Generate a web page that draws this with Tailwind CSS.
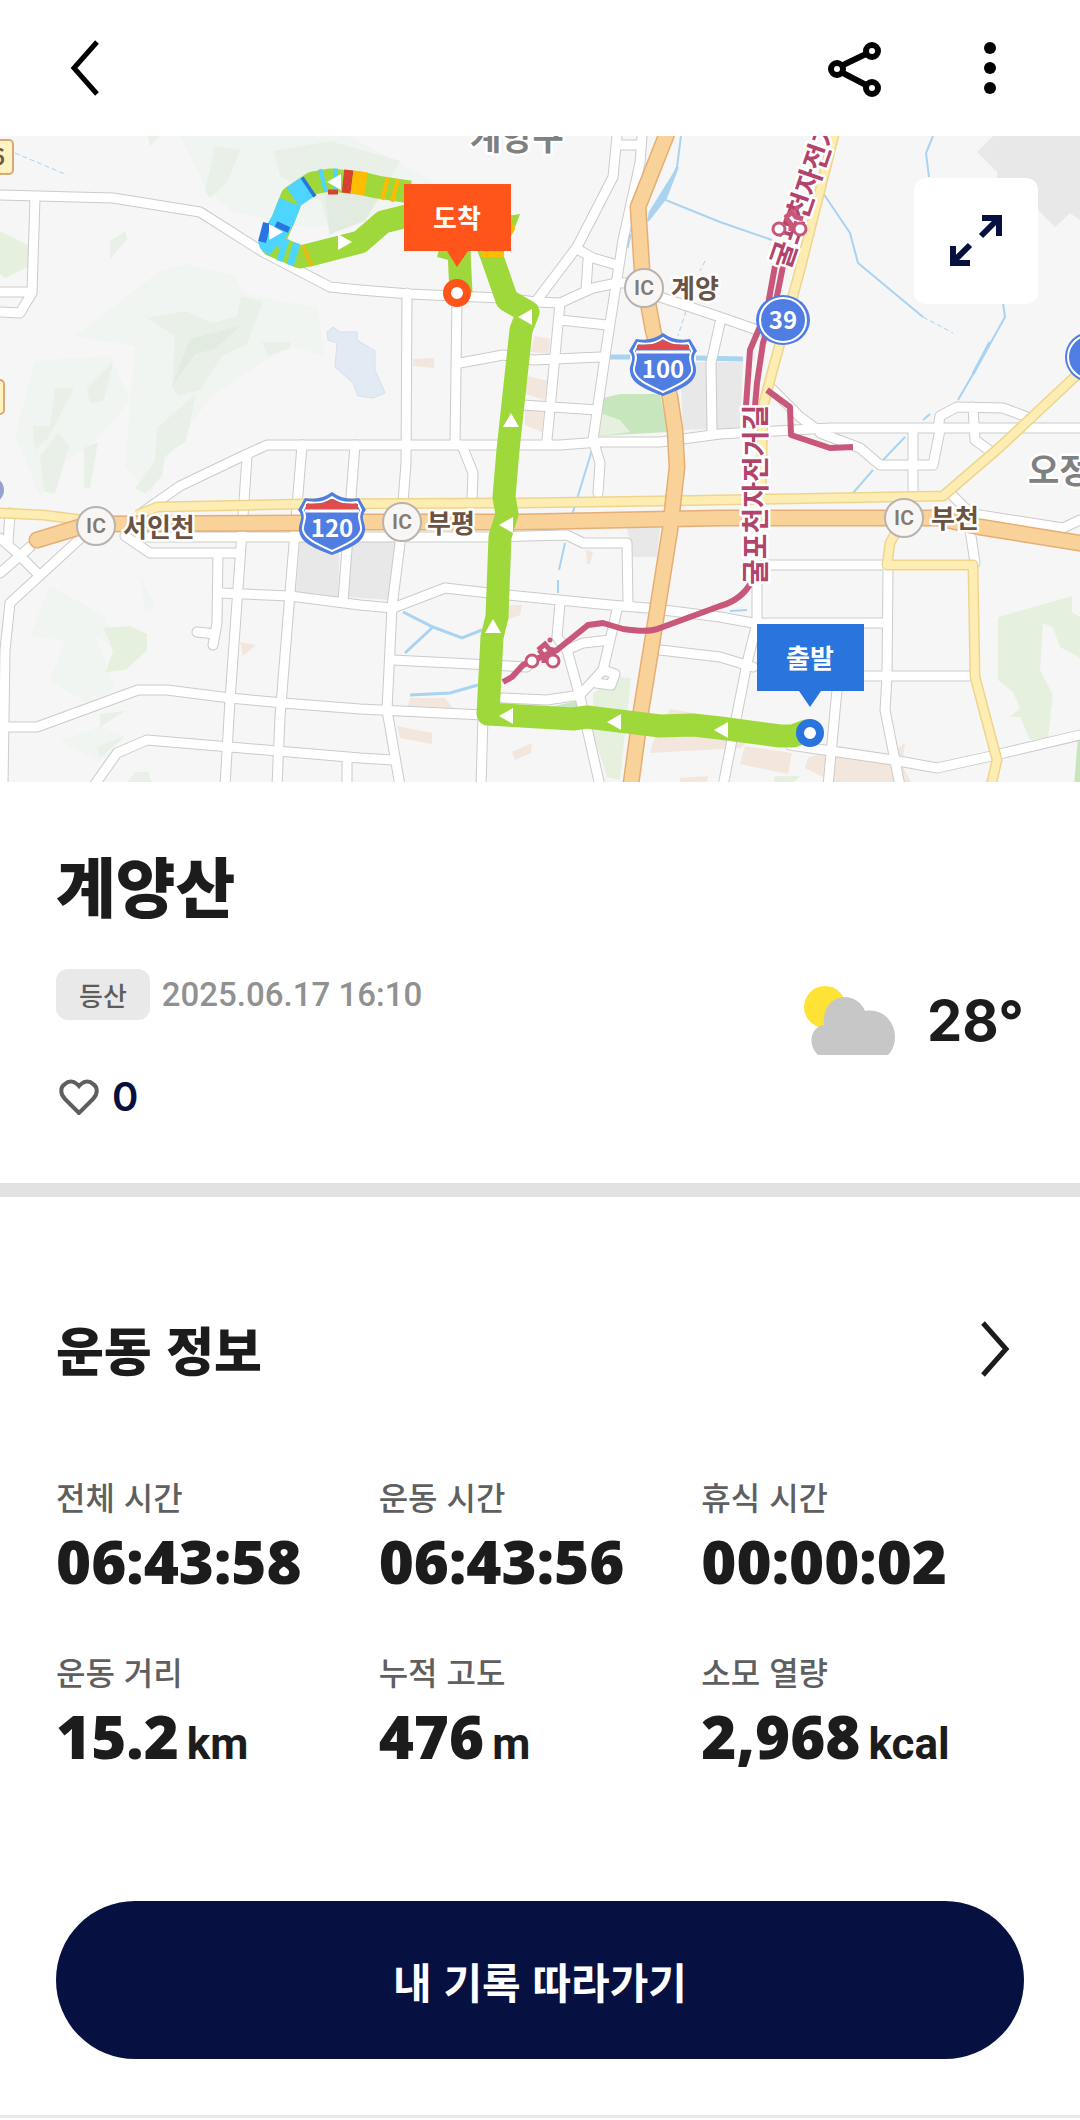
<!DOCTYPE html>
<html lang="ko">
<head>
    <meta charset="UTF-8">
    <meta name="viewport" content="width=device-width, initial-scale=1.0">
    <title>계양산</title>
    <script src="https://cdn.jsdelivr.net/npm/@tailwindcss/browser@4"></script>
</head>
<body class="bg-white text-[#1c1c1c] font-['Noto_Sans_CJK_KR',sans-serif]">
    <header class="flex h-[136px] items-center justify-between px-[58px]">
        <button type="button" aria-label="뒤로" class="flex size-14 items-center justify-center">
            <svg class="h-14 w-8" viewBox="0 0 32 56" fill="none" stroke="#000" stroke-width="5"><path d="M27 2 4 28l23 26"/></svg>
        </button>
        <div class="flex items-center gap-[72px]">
            <button type="button" aria-label="공유">
                <svg class="size-16" viewBox="0 0 64 64" fill="none" stroke="#000" stroke-width="6">
                    <path d="m19 30 25-12M19 36l25 13"/>
                    <circle cx="50" cy="15" r="6"/><circle cx="15" cy="33" r="6"/><circle cx="50" cy="52" r="6"/>
                </svg>
            </button>
            <button type="button" aria-label="더보기">
                <svg class="size-16" viewBox="0 0 64 64"><circle cx="32" cy="12" r="6"/><circle cx="32" cy="32" r="6"/><circle cx="32" cy="52" r="6"/></svg>
            </button>
        </div>
    </header>

    <div class="relative">
        <svg class="block w-full bg-[#f6f6f6]" viewBox="0 0 1080 646" role="img" aria-label="이동 경로 지도">
            <defs>
                <g id="roads" fill="none" stroke-linejoin="round" stroke-linecap="round">
                    <path d="M0 59 113 62 200 76 263 116 330 151 360 154 410 158 500 162 537 166 560 167 593 152 617 147 643 147 660 161 720 181 760 195"/>
                    <path d="M35 62 32 157 20 177 0 176M0 156H32"/>
                    <path d="M143 376 180 350 247 318 267 309H360L560 309 600 306 660 306 720 298 830 292H1080"/>
                    <path d="M247 321 240 424 230 564 225 650M302 309 290 457 280 581 277 650M355 309 343 465"/>
                    <path d="M218 417 217 487 213 509M197 496 215 498M125 400 150 417H240M222 457 290 460 360 469 393 472 445 452 507 459 610 469 647 472 720 481 753 487H883"/>
                    <path d="M0 591H37L138 554H167L230 562 283 567 360 573 483 579M93 651 117 617 147 604 230 611 360 622 393 624M347 624V650"/>
                    <path d="M83 400 10 467 5 514 3 650M0 437 30 411M0 402 17 417 37 437M10 377 8 407"/>
                    <path d="M950 357 967 374 975 427M980 379 1063 392 1080 384M763 429H883M888 434 887 541 885 574 900 650M757 437V487L747 527 723 650M863 540H970M837 554 828 650"/>
                    <path d="M790 609 893 624 937 632 987 621 1080 599M660 514 720 521 753 531M913 294V357M938 293 940 280 957 271 1003 272 1027 281M973 271 975 304 993 317M940 294 933 329H880L860 312 820 297"/>
                    <path d="M770 251 800 281 815 292M617 0 613 41 577 111 537 164M642 0 640 27 623 104 607 207 593 304 600 327 598 357M620 9H640M577 113 593 122 617 129M588 124 586 154"/>
                    <path d="M560 167 547 304M560 184 607 189M460 227 503 219 533 224 600 221M523 269 597 274M457 161 455 307M407 157 406 327 400 407 392 471 387 574 400 650"/>
                    <path d="M463 312 473 337 472 364M393 524 527 531M503 562 547 564 580 559M483 581 481 650M560 467 557 501 567 514 580 561 600 650M617 474 603 534 615 538 611 549 596 547M603 534 580 559M610 504 583 507 567 514"/>
                    <path d="M140 401H493L567 399 583 407H627L628 467M720 187 711 227 712 294"/>
                </g>
                <g id="orange" fill="none" stroke-linecap="round" stroke-linejoin="round">
                    <path d="M37 404 80 391 97 388 300 387 360 386 520 386 720 382 887 382 937 382 980 391 1085 408"/>
                    <path d="M668 -5 638 71 642 134 653 194 670 261 675 294 677 331 670 394 653 501 640 581 630 655"/>
                </g>
                <g id="yellow" fill="none" stroke-linejoin="round">
                    <path d="M-2 377 43 379 83 384M137 379 157 371 300 368 520 367 660 365 943 360 1000 311 1080 236"/>
                    <path d="M835 -5 800 134 770 244 763 271 761 362M897 394 890 407 887 429H973L975 541 997 624 991 650"/>
                </g>
                <g id="shield">
                    <path d="M-27-25Q-12-22 0-31 12-22 27-25L34-13C27-5 34 0 33 7 32 20 18 25 0 32-18 25-32 20-33 7-34 0-27-5-34-13Z" fill="#507de2"/>
                    <path d="M-25-21Q-11-18 0-26 11-18 25-21L29-13C24-5 30 0 29 7 27 16 15 21 0 28-15 21-27 16-29 7-30 0-24-5-29-13Z" fill="none" stroke="#fff" stroke-width="2"/>
                    <path d="M-26-14V-19L-9-20 0-24 9-20 26-19V-14Z" fill="#e04b4b"/>
                    <path d="M-27-12H27" stroke="#fff" stroke-width="3"/>
                </g>
                <g id="bike" fill="none" stroke="#c9577a" stroke-width="3">
                    <circle cx="-11" cy="7" r="6" fill="#fff"/><circle cx="10" cy="7" r="6" fill="#fff"/>
                    <path d="M-5-4 2-10 6-5 13-3M-4-4 1 2V9" stroke-width="5"/><circle cx="7" cy="-14" r="1" fill="#c9577a"/>
                </g>
                <path id="tip" d="M-7 0 7-8V8Z" fill="#fff"/>
            </defs>

            <!-- hills and parks -->
            <g fill="#f0f5f1">
                <path d="M180 0H350L440 50 400 75 310 92 232 76 205 50Z"/>
                <path d="M75 200 160 135 185 128 235 140 245 158 318 172 325 220 290 210 240 240 210 262 190 290 165 324 150 360 125 330 135 210Z"/>
                <path d="M35 225 110 220 130 265 90 310 65 324 40 360 15 300Z"/>
                <path d="M50 450 30 500 65 505 50 545 95 571 115 550 95 500 115 510 105 480ZM60 605 100 590 125 600 100 625 80 615ZM140 440 155 470 145 475Z"/>
            </g>
            <g fill="#e8f0e7">
                <path d="M274 15 330 5 400 25 381 60 330 100 322 66 280 40ZM215 10 240 14 228 45 210 62 205 55ZM147 182 185 175 213 187 237 180 241 160 263 166 247 208 222 220 200 254 178 260 172 252 175 200ZM262 206H290V212L268 220Z"/>
                <path d="M87 252 113 226 104 264 90 268ZM50 290 55 252H74L48 302 35 314 33 290ZM40 320 58 297 69 310 55 358 44 355ZM84 312 98 306 90 352H84ZM157 292 196 258 186 305 165 320 162 340 145 358 135 352 155 325ZM110 105 125 95 127 103 110 123ZM148 0H160L150 10ZM100 578 125 575 100 591ZM97 611 125 600 100 622ZM125 650 135 636H148L153 650Z"/>
            </g>
            <path fill="#e1ebdf" d="M172 250 190 203 240 190 215 213 195 218ZM325 55 360 45 380 60 365 85 330 98Z"/>
            <g fill="#e5f1de">
                <path d="M0 95 30 110 28 131 5 142 0 138ZM104 492 130 490 147 498V514L126 534 106 536 113 515Z"/>
                <path d="M998 481 1072 460V476L1080 481V522L1060 511 1053 492 1043 487 1040 534 1053 559 1048 602 1030 604 1020 581H1010L1020 572 1013 556 998 544Z"/>
                <path d="M593 557 620 541 631 542 620 644 607 641 593 597ZM775 640H800L790 650H773Z"/>
            </g>
            <g fill="#c8e6bd"><path d="M603 262 620 258H660L668 296 598 300ZM1078 600H1080V650H1074ZM550 571 577 565V580H560Z"/></g>
            <path fill="#e5f1de" d="M600 277 620 284 630 296 598 300Z"/>
            <g fill="#e8e8e8">
                <path d="M680 226H743L740 292 683 294ZM300 404H340L338 461 296 457ZM350 404 397 406 390 464 347 461Z"/>
                <path d="M993 0 977 16 997 36V60L1038 74 1055 91 1070 77 1080 84V0ZM627 392H660L657 421H633Z"/>
            </g>
            <g fill="#f3e6dc">
                <path d="M535 200 550 203 549 218 530 216ZM528 240 547 245 545 264 525 258ZM525 273 544 276 542 296 525 289ZM413 223 434 222V232L413 230ZM240 506 256 509 243 520ZM506 469H522L520 479 507 484Z"/>
                <path d="M410 562 445 562 453 572 408 570ZM397 590 432 597V608L400 602ZM512 616 532 607 531 617 515 624ZM586 414 593 416 590 428H587ZM670 573 720 582 750 604 740 612 650 617 655 600ZM745 610 792 617 788 638 740 628ZM680 642 708 640 706 650H680ZM808 622 840 610 890 618 905 607 902 630 912 647H835L805 632Z"/>
            </g>
            <path fill="#e2eaf3" stroke="#d6e0ec" d="M333 191 340 196H357V204L375 215V234L385 257 373 262 358 260 353 247 335 231 337 207 328 204 327 196Z"/>

            <!-- streams -->
            <g fill="none" stroke="#a8d3f1" stroke-width="2">
                <path d="M681 0 677 31 663 63 720 86 772 104M933 0 926 17 929 41M823 57 850 97 858 127 923 181M1003 167 1005 181 980 226 958 264M592 314 573 376 568 393M565 407 559 434M558 444V457M905 301 883 324M873 334 853 357M730 475 747 474M930 278 923 284"/>
                <path d="M678 31 650 76 648 85 666 62Z" fill="#a8d3f1"/>
                <path d="M403 476 433 491 462 502 482 494M410 559 450 557 478 549M405 517 433 491M630 98 627 112M990 206 973 238" stroke-width="3"/>
                <path d="M610 221H630M696 222 743 223" stroke-width="5"/>
                <path d="M15 17 67 39M923 181 953 197M705 125 700 135M686 175 678 200" stroke-dasharray="5 3" stroke-width="1"/>
            </g>

            <!-- roads: casing first, then the fill -->
            <use href="#roads" stroke="#cbcbcb" stroke-width="11"/>
            <use href="#roads" stroke="#fff" stroke-width="9"/>
            <use href="#yellow" stroke="#efd58c" stroke-width="11"/>
            <use href="#yellow" stroke="#fdedb3" stroke-width="8"/>
            <use href="#orange" stroke="#e6ae74" stroke-width="17"/>
            <use href="#orange" stroke="#f8d298" stroke-width="14"/>

            <!-- bicycle road -->
            <g fill="none" stroke="#c9577a" stroke-width="6" stroke-linejoin="round">
                <path d="M775 130 767 174 750 214 746 270M783 130 776 165 763 207 757 247 755 270M767 254 790 271 791 299 830 312 853 311"/>
                <path d="M752 445Q742 464 720 470L660 492Q650 497 623 493L603 487 588 489 557 514 523 529 512 541 503 546"/>
            </g>

            <!-- recorded track -->
            <g fill="none" stroke="#9fd83a" stroke-width="23" stroke-linejoin="round">
                <path d="M806 595 793 600 780 600 720 592 693 589 660 590 587 581 573 583 488 578 492 501 497 481 500 401 507 378 504 361 508 314 521 194 528 176 507 164 492 121 484 100" stroke-linecap="round"/>
                <path d="M461 157 459 115 440 110M415 78 383 86 360 106 313 118 300 121 272 109 283 84 292 61 313 47 330 44 360 47 377 51 410 56"/>
                <g stroke="#4dd5ff">
                    <path d="M297 119 290 117M286 115 280 113M276 111 270 106 283 84 290 66M293 61 309 50M321 45 325 44M333 44 338 44"/>
                </g>
                <path d="M307 52 310 50" stroke="#2a75dd"/>
                <path d="M267 87 262 106" stroke="#2a75dd" stroke-width="8"/>
                <path d="M276 88 289 94" stroke="#2a75dd" stroke-width="6"/>
                <path d="M343 45 352 46" stroke="#d8402f"/>
                <path d="M328 56H338" stroke="#d8402f" stroke-width="5"/>
                <path d="M352 46 366 48M383 52 387 53M393 54 397 55" stroke="#ffbb00"/>
                <path d="M481 118H504" stroke="#ffbb00" stroke-width="6"/>
                <path d="M303 110 312 130" stroke="#e4bd10" stroke-width="4"/>
            </g>
            <path d="M508 80 520 78 514 94 510 101Z" fill="#9fd83a"/><path d="M510 75 513 85 510 102 515 93Z" fill="#ffbb00"/>
            <use href="#tip" x="525" y="181"/>
            <use href="#tip" transform="translate(511 284) rotate(90)"/>
            <use href="#tip" x="506" y="389"/>
            <use href="#tip" transform="translate(493 490) rotate(90)"/>
            <use href="#tip" x="506" y="580"/>
            <use href="#tip" x="614" y="586"/>
            <use href="#tip" x="721" y="594"/>
            <use href="#tip" x="334" y="46"/>
            <use href="#tip" transform="translate(276 96) rotate(180)"/>
            <use href="#tip" transform="translate(345 106) rotate(180)"/>

            <!-- road names -->
            <g fill="#b2446b" stroke="#fff" stroke-width="5" paint-order="stroke" stroke-linejoin="round" font-size="28" font-weight="700">
                <text transform="translate(766 449) rotate(-90)">굴포천자전거길</text>
                <text transform="translate(789 134) rotate(-71)">굴포천자전거</text>
            </g>
            <use href="#bike" x="790" y="86"/>
            <use href="#bike" x="543" y="518"/>

            <!-- route numbers -->
            <rect x="-24" y="4" width="37" height="34" rx="4" fill="#fff3c2" stroke="#dba978" stroke-width="2"/>
            <text x="-8" y="29" font-size="22" font-weight="700" fill="#6b5a45">6</text>
            <rect x="-24" y="244" width="28" height="34" rx="4" fill="#fff3c2" stroke="#dba978" stroke-width="2"/>
            <circle cx="-9" cy="354" r="13" fill="#93a3cd"/>
            <g fill="#507de2"><ellipse cx="783" cy="184" rx="27" ry="25"/><circle cx="1090" cy="221" r="25"/></g>
            <g fill="none" stroke="#fff" stroke-width="2"><ellipse cx="783" cy="184" rx="23" ry="22"/><circle cx="1090" cy="221" r="22"/></g>
            <use href="#shield" x="663" y="228"/>
            <use href="#shield" x="332" y="387"/>
            <g fill="#fff" font-size="24" font-weight="700" text-anchor="middle">
                <text x="783" y="193">39</text>
                <text x="663" y="242">100</text>
                <text x="332" y="401">120</text>
            </g>

            <!-- interchanges -->
            <g fill="#f7f6f5" stroke="#b9b2ae" stroke-width="2">
                <circle cx="644" cy="152" r="19"/><circle cx="96" cy="390" r="19"/><circle cx="402" cy="386" r="19"/><circle cx="904" cy="382" r="19"/>
            </g>
            <g fill="#857a72" font-size="21" font-weight="600" text-anchor="middle" font-family="Roboto, sans-serif">
                <text x="644" y="159">IC</text><text x="96" y="397">IC</text><text x="402" y="393">IC</text><text x="904" y="389">IC</text>
            </g>
            <g fill="#6b5344" stroke="#fff" stroke-width="5" paint-order="stroke" stroke-linejoin="round" font-size="26" font-weight="700">
                <text x="671" y="162">계양</text>
                <text x="123" y="401">서인천</text>
                <text x="427" y="397">부평</text>
                <text x="931" y="392">부천</text>
            </g>
            <g fill="#808080" stroke="#fff" stroke-width="5" paint-order="stroke" stroke-linejoin="round" font-size="34" font-weight="700">
                <text x="470" y="14">계양구</text>
                <text x="1028" y="347">오정</text>
            </g>

            <!-- finish and start -->
            <path d="M404 48H511V115H468L457 131 447 115H404Z" fill="#ff541a"/>
            <circle cx="457" cy="157" r="10" fill="#fff" stroke="#ff541a" stroke-width="8"/>
            <path d="M757 488H864V555H821L810 571 799 555H757Z" fill="#2a75dd"/>
            <circle cx="810" cy="597" r="10" fill="#fff" stroke="#2a75dd" stroke-width="8"/>
            <g fill="#fff" font-size="26" font-weight="700" text-anchor="middle">
                <text x="457" y="92">도착</text>
                <text x="810" y="532">출발</text>
            </g>
        </svg>
        <button type="button" aria-label="지도 확대" class="absolute right-[42px] top-[42px] flex h-[126px] w-[124px] items-center justify-center rounded-xl bg-white">
            <svg class="size-14" viewBox="0 0 56 56" fill="none" stroke="#061141" stroke-width="6"><path d="M34 5H51V23M50 6 33 23M22 32 5 49M5 33V50H22"/></svg>
        </button>
    </div>

    <main>
        <section class="border-b-[14px] border-[#e2e2e2] px-14 pb-[62px] pt-14">
            <h1 class="text-[65px] font-black leading-[92px]">계양산</h1>
            <div class="mt-[39px] flex items-start justify-between">
                <div>
                    <div class="flex items-center gap-3">
                        <span class="rounded-xl bg-[#e9e9e9] px-[23px] text-[26px] font-medium leading-[51px] text-[#5c5c5c]">등산</span>
                        <time datetime="2025-06-17T16:10" class="font-['Roboto',sans-serif] text-[33px] font-medium leading-[51px] text-[#919191]">2025.06.17 16:10</time>
                    </div>
                    <button type="button" aria-label="좋아요 0" class="mt-[53px] flex h-12 items-center gap-3">
                        <svg class="h-9 w-11" viewBox="0 0 44 36" fill="none" stroke="#5f5f5f" stroke-width="4"><path d="M23 34 9 20C4 15 4 8 9 5c4-4 10-3 14 2 4-5 10-6 14-2 5 3 5 10 0 15Z"/></svg>
                        <span class="font-['Inter',sans-serif] text-[40px] font-semibold leading-[48px] text-[#061141]">0</span>
                    </button>
                </div>
                <div class="flex items-center gap-8 pt-3">
                    <svg class="h-[74px] w-[92px]" viewBox="0 0 92 74">
                        <circle cx="22" cy="23" r="21" fill="#ffe236"/>
                        <path d="M15 71C3 59 9 42 21 41 19 25 29 13 41 13 51 13 59 19 62 27 79 24 92 37 92 53 92 61 89 67 85 71Z" fill="#c7c7c7"/>
                    </svg>
                    <span class="font-['Inter',sans-serif] text-[56px] font-bold leading-[80px]">28°</span>
                </div>
            </div>
        </section>

        <section class="px-14 pb-14 pt-28">
            <a href="#" class="flex h-20 items-center justify-between pr-3">
                <h2 class="text-[52px] font-black leading-[80px]">운동 정보</h2>
                <svg class="h-14 w-8" viewBox="0 0 32 56" fill="none" stroke="#1c1c1c" stroke-width="5"><path d="m3 2 23 26L3 54"/></svg>
            </a>
            <dl class="mt-[83px] grid grid-cols-3 gap-y-13">
                <div>
                    <dt class="text-[32px] font-medium leading-[48px] text-[#5f5f5f]">전체 시간</dt>
                    <dd class="mt-[7px] font-['Open_Sans',sans-serif] text-[60px] font-extrabold leading-[68px]">06:43:58</dd>
                </div>
                <div>
                    <dt class="text-[32px] font-medium leading-[48px] text-[#5f5f5f]">운동 시간</dt>
                    <dd class="mt-[7px] font-['Open_Sans',sans-serif] text-[60px] font-extrabold leading-[68px]">06:43:56</dd>
                </div>
                <div>
                    <dt class="text-[32px] font-medium leading-[48px] text-[#5f5f5f]">휴식 시간</dt>
                    <dd class="mt-[7px] font-['Open_Sans',sans-serif] text-[60px] font-extrabold leading-[68px]">00:00:02</dd>
                </div>
                <div>
                    <dt class="text-[32px] font-medium leading-[48px] text-[#5f5f5f]">운동 거리</dt>
                    <dd class="mt-[7px] flex items-baseline gap-2 font-['Open_Sans',sans-serif] text-[60px] font-extrabold leading-[68px]">15.2<span class="font-['Roboto',sans-serif] text-[44px] font-bold">km</span></dd>
                </div>
                <div>
                    <dt class="text-[32px] font-medium leading-[48px] text-[#5f5f5f]">누적 고도</dt>
                    <dd class="mt-[7px] flex items-baseline gap-2 font-['Open_Sans',sans-serif] text-[60px] font-extrabold leading-[68px]">476<span class="font-['Roboto',sans-serif] text-[44px] font-bold">m</span></dd>
                </div>
                <div>
                    <dt class="text-[32px] font-medium leading-[48px] text-[#5f5f5f]">소모 열량</dt>
                    <dd class="mt-[7px] flex items-baseline gap-2 font-['Open_Sans',sans-serif] text-[60px] font-extrabold leading-[68px]">2,968<span class="font-['Roboto',sans-serif] text-[44px] font-bold">kcal</span></dd>
                </div>
            </dl>
            <button type="button" class="mt-[123px] h-[158px] w-full rounded-full bg-[#061141] text-[42px] font-bold text-white">내 기록 따라가기</button>
        </section>
        <hr class="border-t-[3px] border-[#e9e9e9]">
    </main>
</body>
</html>
